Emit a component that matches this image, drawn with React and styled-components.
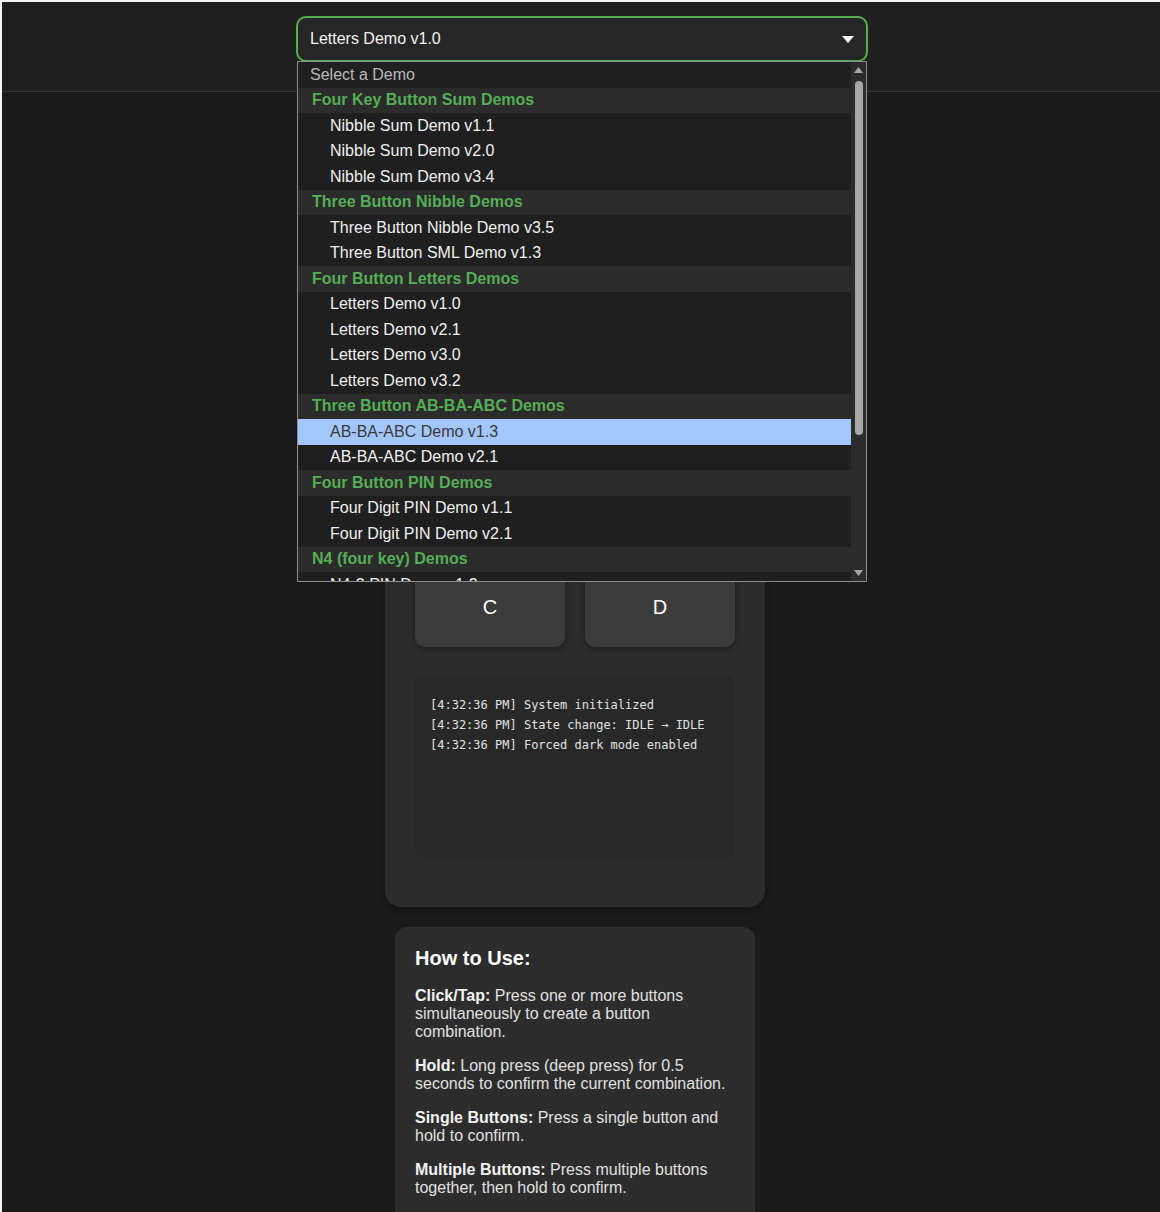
import React from 'react';
import styled, { createGlobalStyle } from 'styled-components';

const GlobalStyle = createGlobalStyle`
  html { background: #f4f4f4; }
  body {
    margin: 2px 0 0 2px;
    background: #1b1b1b;
    font-family: "Liberation Sans", Arial, sans-serif;
    color: #e6e6e6;
  }
  * { box-sizing: border-box; }
`;

const Page = styled.div`
  min-height: 1210px;
  background: #1b1b1b;
`;

const Header = styled.header`
  background: #1f1f1f;
  border-bottom: 1px solid #333;
  padding: 14px 0 29px 2px;
  display: flex;
  justify-content: center;
`;

const SelectWrap = styled.div`
  position: relative;
  width: 572px;
`;

const Trigger = styled.div`
  height: 46px;
  border: 2px solid #55ad55;
  border-radius: 10px;
  background: #262626;
  display: flex;
  align-items: center;
  justify-content: space-between;
  padding: 0 12px;
  font-size: 16px;
  color: #f2f2f2;
`;

const ListBox = styled.div`
  position: absolute;
  top: 45px;
  left: 1px;
  width: 570px;
  height: 521px;
  border: 1px solid #8c8c8c;
  background: #1f1f1f;
  display: flex;
  z-index: 10;
`;

const Options = styled.div`
  flex: 1;
  overflow: hidden;
`;

const Row = styled.div`
  height: 25.5px;
  display: flex;
  align-items: center;
  font-size: 16px;
  white-space: nowrap;
  padding-left: ${p => (p.$kind === 'group' ? '14px' : p.$kind === 'item' ? '32px' : '12px')};
  background: ${p => (p.$active ? '#a3c6fb' : p.$kind === 'group' ? '#2b2b2b' : '#1f1f1f')};
  color: ${p => (p.$active ? '#3a3a3a' : p.$kind === 'group' ? '#55ad55' : p.$kind === 'placeholder' ? '#b9b9b9' : '#f0f0f0')};
  font-weight: ${p => (p.$kind === 'group' ? 700 : 400)};
`;

const ScrollBar = styled.div`
  width: 15px;
  background: #2b2b2b;
  display: flex;
  flex-direction: column;
  align-items: center;
  padding: 5px 0;
`;

const Thumb = styled.div`
  width: 8px;
  height: 354px;
  margin-top: 8px;
  border-radius: 4px;
  background: #a6a6a6;
`;

const Spacer = styled.div`
  flex: 1;
`;

const Main = styled.main`
  display: flex;
  flex-direction: column;
  align-items: center;
  padding: 39px 12px 0 0;
  gap: 20px;
`;

const Card = styled.section`
  width: 380px;
  padding: 30px 30px 50px;
  background: #2c2c2c;
  border-radius: 16px;
  box-shadow: 0 4px 12px rgba(0, 0, 0, 0.3);
`;

const Title = styled.h2`
  margin: 0 0 20px;
  font-size: 22px;
  text-align: center;
  color: #fff;
`;

const Display = styled.div`
  height: 160px;
  margin-bottom: 20px;
  border-radius: 10px;
  background: #222;
  display: flex;
  align-items: center;
  justify-content: center;
  font-size: 40px;
  color: #55ad55;
`;

const Status = styled.div`
  height: 60px;
  margin-bottom: 20px;
  text-align: center;
  font-size: 16px;
  color: #bbb;
`;

const ButtonGrid = styled.div`
  display: grid;
  grid-template-columns: 150px 150px;
  gap: 20px;
`;

const KeyButton = styled.button`
  height: 80px;
  border: none;
  border-radius: 10px;
  background: #3b3b3b;
  color: #fff;
  font-family: "Liberation Sans", Arial, sans-serif;
  font-size: 20px;
  font-weight: 400;
  box-shadow: 0 2px 6px rgba(0, 0, 0, 0.35);
`;

const Log = styled.div`
  margin-top: 30px;
  height: 180px;
  padding: 18px 15px;
  background: #282828;
  border-radius: 8px;
  font-family: "DejaVu Sans Mono", "Liberation Mono", monospace;
  font-size: 12px;
  line-height: 20px;
  color: #e0e0e0;
`;

const Help = styled.section`
  width: 360px;
  padding: 20px 20px 10px;
  background: #2c2c2c;
  border-radius: 12px;
  font-size: 16px;
  line-height: 18px;
  color: #e0e0e0;

  h3 {
    margin: 0 0 17px;
    font-size: 20px;
    line-height: 23px;
    color: #fff;
  }
  p {
    margin: 0 0 16px;
  }
  strong {
    color: #f2f2f2;
  }
`;

const groups = [
  { label: 'Four Key Button Sum Demos', items: ['Nibble Sum Demo v1.1', 'Nibble Sum Demo v2.0', 'Nibble Sum Demo v3.4'] },
  { label: 'Three Button Nibble Demos', items: ['Three Button Nibble Demo v3.5', 'Three Button SML Demo v1.3'] },
  { label: 'Four Button Letters Demos', items: ['Letters Demo v1.0', 'Letters Demo v2.1', 'Letters Demo v3.0', 'Letters Demo v3.2'] },
  { label: 'Three Button AB-BA-ABC Demos', items: ['AB-BA-ABC Demo v1.3', 'AB-BA-ABC Demo v2.1'] },
  { label: 'Four Button PIN Demos', items: ['Four Digit PIN Demo v1.1', 'Four Digit PIN Demo v2.1'] },
  { label: 'N4 (four key) Demos', items: ['N4-3 PIN Demo v1.2', 'N4-4 PIN Demo v1.0'] },
];

const highlighted = 'AB-BA-ABC Demo v1.3';

const logLines = [
  '[4:32:36 PM] System initialized',
  '[4:32:36 PM] State change: IDLE → IDLE',
  '[4:32:36 PM] Forced dark mode enabled',
];

export default function App() {
  return (
    <Page>
      <GlobalStyle />
      <Header>
        <SelectWrap>
          <Trigger>
            <span>Letters Demo v1.0</span>
            <svg width="12" height="7" viewBox="0 0 12 7">
              <polygon points="0,0 12,0 6,7" fill="#fff" />
            </svg>
          </Trigger>
          <ListBox>
            <Options>
              <Row $kind="placeholder">Select a Demo</Row>
              {groups.map(g => (
                <React.Fragment key={g.label}>
                  <Row $kind="group">{g.label}</Row>
                  {g.items.map(item => (
                    <Row key={item} $kind="item" $active={item === highlighted}>{item}</Row>
                  ))}
                </React.Fragment>
              ))}
            </Options>
            <ScrollBar>
              <svg width="9" height="6" viewBox="0 0 9 6">
                <polygon points="4.5,0 9,6 0,6" fill="#a6a6a6" />
              </svg>
              <Thumb />
              <Spacer />
              <svg width="9" height="6" viewBox="0 0 9 6">
                <polygon points="0,0 9,0 4.5,6" fill="#a6a6a6" />
              </svg>
            </ScrollBar>
          </ListBox>
        </SelectWrap>
      </Header>

      <Main>
        <Card>
          <Title>Letters Demo v1.0</Title>
          <Display>—</Display>
          <Status>State: IDLE</Status>
          <ButtonGrid>
            <KeyButton>A</KeyButton>
            <KeyButton>B</KeyButton>
            <KeyButton>C</KeyButton>
            <KeyButton>D</KeyButton>
          </ButtonGrid>
          <Log>
            {logLines.map(l => (
              <div key={l}>{l}</div>
            ))}
          </Log>
        </Card>

        <Help>
          <h3>How to Use:</h3>
          <p><strong>Click/Tap:</strong> Press one or more buttons simultaneously to create a button combination.</p>
          <p><strong>Hold:</strong> Long press (deep press) for 0.5 seconds to confirm the current combination.</p>
          <p><strong>Single Buttons:</strong> Press a single button and hold to confirm.</p>
          <p><strong>Multiple Buttons:</strong> Press multiple buttons together, then hold to confirm.</p>
        </Help>
      </Main>
    </Page>
  );
}
